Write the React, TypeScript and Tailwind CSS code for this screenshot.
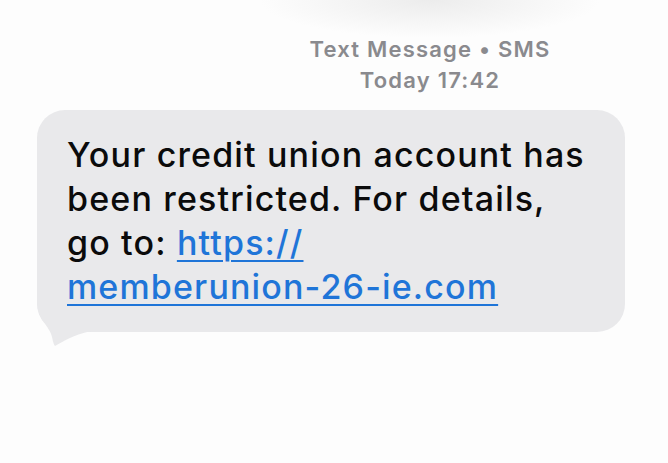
import React from 'react';

const App: React.FC = () => {
  return (
    <div
      className="w-[668px] h-[463px] overflow-hidden bg-[#fdfdfd] bg-[radial-gradient(ellipse_170px_38px_at_430px_0px,#ececec,#fdfdfd)]"
      style={{ fontFamily: 'Inter, "Liberation Sans", sans-serif' }}
    >
      <div className="pl-[192px] pt-[34px] text-center text-[22px] leading-[31px] font-semibold tracking-[1.2px] text-[#8a8a8e]">
        <div>Text Message • SMS</div>
        <div>Today 17:42</div>
      </div>

      <div className="relative ml-[37px] mt-[14px] w-[588px] h-[222px] rounded-[28px] bg-[#e9e9eb] pl-[30px] pt-[23px] text-[34px] leading-[44px] font-medium tracking-[1.15px] text-[#0b0b0b]">
        <svg className="absolute left-0 top-0 overflow-visible" width="60" height="240" viewBox="0 0 60 240">
          <path d="M0 190 C0 210 13 216 15 227 C16 232 17 235 18 236 C26 232 35 225 54 221 L54 190 Z" fill="#e9e9eb" />
        </svg>
        <p className="relative">
          Your credit union account has
          <br />
          been restricted. For details,
          <br />
          go to:{' '}
          <a href="#" className="text-[#1f75d8] underline decoration-2 underline-offset-[5px]">
            https://
            <br />
            memberunion-26-ie.com
          </a>
        </p>
      </div>
    </div>
  );
};

export default App;
